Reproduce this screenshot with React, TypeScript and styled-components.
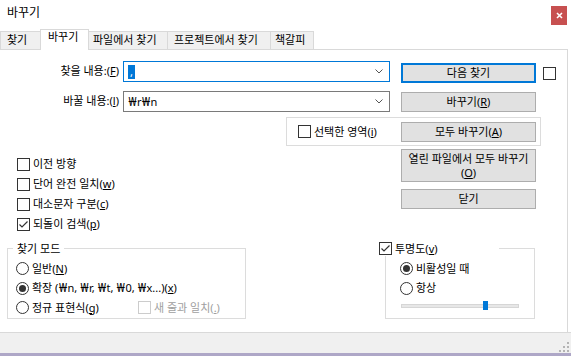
import React from "react";
import styled, { createGlobalStyle, css } from "styled-components";

const GlobalStyle = createGlobalStyle`
  html, body { margin: 0; padding: 0; background: #fff; }
  body {
    width: 571px; height: 356px; overflow: hidden;
    font-family: "Noto Sans", "Noto Sans CJK KR", sans-serif;
    font-size: 11px; color: #000;
  }
  * { box-sizing: border-box; }
  u { text-underline-offset: 1px; }
`;

const Window = styled.div`
  width: 571px;
  height: 356px;
  display: flex;
  flex-direction: column;
  background: #fff;
`;

const TitleBar = styled.div`
  height: 29px;
  flex: none;
  display: flex;
  align-items: flex-start;
  padding-left: 7px;
`;

const Title = styled.div`
  font-size: 12px;
  line-height: 16px;
  margin-top: 5px;
`;

const CloseButton = styled.div`
  margin-left: auto;
  margin-top: 6px;
  margin-right: 4px;
  width: 16px;
  height: 19px;
  background: #c75050;
  display: flex;
  align-items: center;
  justify-content: center;
`;

const TabStrip = styled.div`
  height: 20px;
  flex: none;
  display: flex;
  align-items: flex-end;
  position: relative;
  z-index: 1;
`;

const Tab = styled.div<{ $w: number; $pl: number; $active?: boolean }>`
  width: ${(p) => p.$w}px;
  padding-left: ${(p) => p.$pl}px;
  height: 18px;
  line-height: 15px;
  background: #f0f0f0;
  border: 1px solid #d9d9d9;
  border-bottom: none;
  white-space: nowrap;
  flex: none;
  & + & { margin-left: -1px; }
  ${(p) =>
    p.$active &&
    css`
      height: 21px;
      margin-bottom: -1px;
      background: #fff;
      line-height: 14px;
      position: relative;
      z-index: 1;
    `}
`;

const Panel = styled.div`
  flex: none;
  height: 283px;
  width: 568px;
  border-top: 1px solid #d9d9d9;
  border-right: 1px solid #d9d9d9;
  padding-top: 11px;
  display: flex;
  flex-direction: column;
`;

const FieldRow = styled.div<{ $mt: number }>`
  display: flex;
  align-items: flex-start;
  margin-top: ${(p) => p.$mt}px;
`;

const FieldLabel = styled.label`
  width: 123px;
  flex: none;
  padding-right: 4px;
  text-align: right;
  height: 21px;
  line-height: 20px;
  white-space: nowrap;
`;

const Combo = styled.div<{ $focused?: boolean }>`
  width: 267px;
  height: 21px;
  flex: none;
  border: 1px solid ${(p) => (p.$focused ? "#0078d7" : "#7a7a7a")};
  background: #fff;
  display: flex;
  align-items: center;
  padding-left: 4px;
  padding-right: 6px;
`;

const ComboText = styled.span`
  flex: 1;
  line-height: 14px;
  white-space: nowrap;
`;

const Selection = styled.span`
  display: inline-block;
  background: #0078d7;
  color: #fff;
  padding: 0 2px;
  line-height: 14px;
`;

const Won = styled.span`
  display: inline-block;
  width: 9px;
  text-align: center;
  font-size: 12px;
  line-height: 14px;
`;

const Button = styled.div<{ $default?: boolean; $h?: number; $mt?: number; $ml?: number; $auto?: boolean }>`
  width: 135px;
  height: ${(p) => p.$h ?? 20}px;
  margin-top: ${(p) => p.$mt ?? 0}px;
  margin-left: ${(p) => (p.$auto ? "auto" : `${p.$ml ?? 0}px`)};
  flex: none;
  background: #e1e1e1;
  border: ${(p) => (p.$default ? "2px solid #0078d7" : "1px solid #adadad")};
  display: flex;
  align-items: center;
  justify-content: center;
  text-align: center;
  line-height: 13.5px;
  white-space: nowrap;
`;

const ButtonLine = styled.span`
  display: block;
  height: 13.5px;
`;

const Box = styled.span<{ $disabled?: boolean; $mt?: number; $ml?: number }>`
  width: 13px;
  height: 13px;
  flex: none;
  margin-top: ${(p) => p.$mt ?? 0}px;
  margin-left: ${(p) => p.$ml ?? 0}px;
  border: 1px solid ${(p) => (p.$disabled ? "#cccccc" : "#333333")};
  background: #fff;
  display: inline-flex;
  align-items: center;
  justify-content: center;
`;

const RadioCircle = styled.span<{ $checked?: boolean }>`
  width: 13px;
  height: 13px;
  flex: none;
  border: 1px solid #333333;
  border-radius: 50%;
  background: #fff;
  display: inline-flex;
  align-items: center;
  justify-content: center;
  &::after {
    content: "";
    width: 7px;
    height: 7px;
    border-radius: 50%;
    background: ${(p) => (p.$checked ? "#333333" : "transparent")};
  }
`;

const Item = styled.div<{ $h?: number; $w?: number; $disabled?: boolean }>`
  display: flex;
  align-items: center;
  gap: 3px;
  height: ${(p) => (p.$h ? `${p.$h}px` : "auto")};
  width: ${(p) => (p.$w ? `${p.$w}px` : "auto")};
  flex: none;
  white-space: nowrap;
  line-height: 14px;
  color: ${(p) => (p.$disabled ? "#a0a0a0" : "#000")};
`;

const SelectionGroup = styled.div`
  margin-top: 5px;
  margin-left: 286px;
  width: 255px;
  height: 29px;
  border: 1px solid #dcdcdc;
  display: flex;
  align-items: center;
  padding-left: 11px;
  padding-right: 4px;
`;

const LowerSection = styled.div`
  display: flex;
  margin-top: 3px;
`;

const OptionColumn = styled.div`
  width: 401px;
  flex: none;
  padding-left: 17px;
  padding-top: 5px;
  display: flex;
  flex-direction: column;
`;

const ButtonColumn = styled.div`
  display: flex;
  flex-direction: column;
`;

const GroupRow = styled.div`
  display: flex;
  margin-top: 14px;
`;

const GroupBox = styled.div<{ $ml: number; $w: number; $pl: number }>`
  position: relative;
  flex: none;
  margin-left: ${(p) => p.$ml}px;
  width: ${(p) => p.$w}px;
  height: 71px;
  border: 1px solid #dcdcdc;
  padding: 10px 0 0 ${(p) => p.$pl}px;
  display: flex;
  flex-direction: column;
`;

const Legend = styled.div<{ $left: number; $w?: number; $px?: number }>`
  position: absolute;
  top: -8px;
  left: ${(p) => p.$left}px;
  width: ${(p) => (p.$w ? `${p.$w}px` : "auto")};
  height: 15px;
  padding: 0 ${(p) => p.$px ?? 0}px;
  background: #fff;
  display: flex;
  align-items: center;
  gap: 3px;
  line-height: 15px;
  white-space: nowrap;
`;

const Row = styled.div`
  display: flex;
  align-items: center;
  height: 19.5px;
`;

const SliderRow = styled.div`
  height: 19.5px;
  padding-top: 6px;
  padding-left: 1px;
`;

const Track = styled.div`
  position: relative;
  width: 118px;
  height: 4px;
  background: #e7e7e7;
  border: 1px solid #d6d6d6;
`;

const Thumb = styled.div<{ $pos: number }>`
  position: absolute;
  top: -4px;
  left: ${(p) => p.$pos}px;
  width: 5px;
  height: 9px;
  background: #0078d7;
`;

const StatusBar = styled.div`
  height: 21px;
  flex: none;
  background: #f0f0f0;
  border-top: 1px solid #d9d9d9;
  display: flex;
  justify-content: flex-end;
  align-items: flex-end;
  padding: 0 2px 1px 0;
`;

const BackStrip = styled.div`
  height: 3px;
  flex: none;
  background: #aea7c7;
`;

const Check = () => (
  <svg width="11" height="11" viewBox="0 0 11 11">
    <path d="M1.5 5.5 L4 8 L9.5 2.5" fill="none" stroke="#333" strokeWidth="1.2" />
  </svg>
);

const CheckBox: React.FC<{ checked?: boolean; disabled?: boolean; mt?: number; ml?: number }> = ({ checked, disabled, mt, ml }) => (
  <Box $disabled={disabled} $mt={mt} $ml={ml}>{checked && <Check />}</Box>
);

const Chevron = () => (
  <svg width="8" height="5" viewBox="0 0 8 5">
    <path d="M0.5 0.5 L4 4 L7.5 0.5" fill="none" stroke="#555" strokeWidth="1" />
  </svg>
);

const Grip = () => (
  <svg width="10" height="10" viewBox="0 0 10 10">
    {[
      [8, 0],
      [4, 4],
      [8, 4],
      [0, 8],
      [4, 8],
      [8, 8],
    ].map(([x, y]) => (
      <rect key={`${x}-${y}`} x={x} y={y} width="2" height="2" fill="#b4b4b4" />
    ))}
  </svg>
);

const CloseIcon = () => (
  <svg width="7" height="7" viewBox="0 0 7 7">
    <path d="M1 1 L6 6 M6 1 L1 6" stroke="#fff" strokeWidth="1.6" />
  </svg>
);

export default function App() {
  return (
    <>
      <GlobalStyle />
      <Window>
        <TitleBar>
          <Title>바꾸기</Title>
          <CloseButton>
            <CloseIcon />
          </CloseButton>
        </TitleBar>
        <TabStrip>
          <Tab $w={41} $pl={6}>찾기</Tab>
          <Tab $w={49} $pl={7} $active>바꾸기</Tab>
          <Tab $w={80} $pl={4}>파일에서 찾기</Tab>
          <Tab $w={104} $pl={6}>프로젝트에서 찾기</Tab>
          <Tab $w={44} $pl={4}>책갈피</Tab>
        </TabStrip>
        <Panel>
          <FieldRow $mt={0}>
            <FieldLabel>찾을 내용:(<u>F</u>)</FieldLabel>
            <Combo $focused>
              <ComboText><Selection>,</Selection></ComboText>
              <Chevron />
            </Combo>
            <Button $default $mt={2} $ml={11}>다음 찾기</Button>
            <CheckBox mt={6} ml={7} />
          </FieldRow>
          <FieldRow $mt={8}>
            <FieldLabel>바꿀 내용:(<u>l</u>)</FieldLabel>
            <Combo>
              <ComboText><Won>₩</Won>r<Won>₩</Won>n</ComboText>
              <Chevron />
            </Combo>
            <Button $mt={1} $ml={11}>바꾸기(<u>R</u>)</Button>
          </FieldRow>
          <SelectionGroup>
            <Item>
              <CheckBox />
              <span>선택한 영역(<u>i</u>)</span>
            </Item>
            <Button $auto>모두 바꾸기(<u>A</u>)</Button>
          </SelectionGroup>
          <LowerSection>
            <OptionColumn>
              <Item $h={20}><CheckBox /><span>이전 방향</span></Item>
              <Item $h={20}><CheckBox /><span>단어 완전 일치(<u>w</u>)</span></Item>
              <Item $h={20}><CheckBox /><span>대소문자 구분(<u>c</u>)</span></Item>
              <Item $h={20}><CheckBox checked /><span>되돌이 검색(<u>p</u>)</span></Item>
            </OptionColumn>
            <ButtonColumn>
              <Button $h={33}>
                <span>
                  <ButtonLine>열린 파일에서 모두 바꾸기</ButtonLine>
                  <ButtonLine>(<u>O</u>)</ButtonLine>
                </span>
              </Button>
              <Button $mt={7}>닫기</Button>
            </ButtonColumn>
          </LowerSection>
          <GroupRow>
            <GroupBox $ml={7} $w={239} $pl={8}>
              <Legend $left={5} $px={4}>찾기 모드</Legend>
              <Row>
                <Item><RadioCircle /><span>일반(<u>N</u>)</span></Item>
              </Row>
              <Row>
                <Item>
                  <RadioCircle $checked />
                  <span>
                    확장 (<Won>₩</Won>n, <Won>₩</Won>r, <Won>₩</Won>t, <Won>₩</Won>0, <Won>₩</Won>x...)(<u>x</u>)
                  </span>
                </Item>
              </Row>
              <Row>
                <Item $w={122}><RadioCircle /><span>정규 표현식(<u>g</u>)</span></Item>
                <Item $disabled><CheckBox disabled /><span>새 줄과 일치(<u>.</u>)</span></Item>
              </Row>
            </GroupBox>
            <GroupBox $ml={139} $w={150} $pl={14}>
              <Legend $left={-7} $w={120}>
                <CheckBox checked />
                <span>투명도(<u>v</u>)</span>
              </Legend>
              <Row>
                <Item><RadioCircle $checked /><span>비활성일 때</span></Item>
              </Row>
              <Row>
                <Item><RadioCircle /><span>항상</span></Item>
              </Row>
              <SliderRow>
                <Track>
                  <Thumb $pos={81} />
                </Track>
              </SliderRow>
            </GroupBox>
          </GroupRow>
        </Panel>
        <StatusBar>
          <Grip />
        </StatusBar>
        <BackStrip />
      </Window>
    </>
  );
}
